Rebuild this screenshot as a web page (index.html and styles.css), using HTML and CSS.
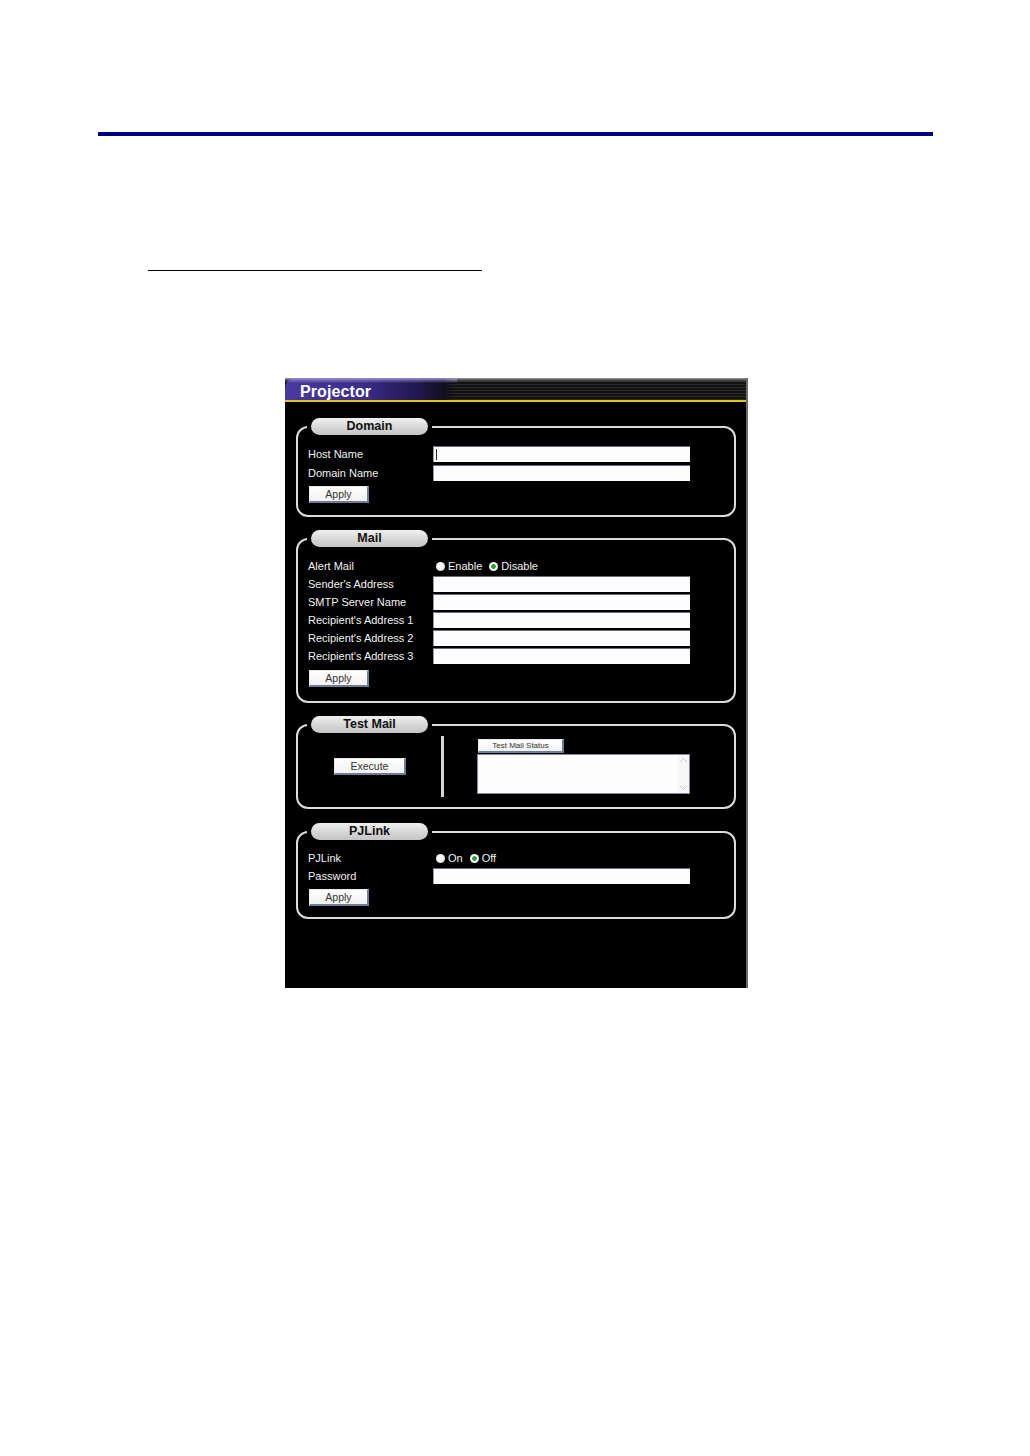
FILE: index.html
```html
<!DOCTYPE html>
<html>
<head>
<meta charset="utf-8">
<title>Projector</title>
<link rel="stylesheet" href="styles.css">
</head>
<body>
<div class="rule"></div>
<div class="subline"></div>
<div class="shot">
  <div class="hdr">
    <div class="tab">Projector</div>
  </div>
  <div class="content">
    <fieldset class="grp g-domain">
      <legend><span class="pill">Domain</span></legend>
      <div class="rows">
        <div class="row"><span class="lbl">Host Name</span><span class="field"><span class="caret"></span></span></div>
        <div class="row"><span class="lbl">Domain Name</span><span class="field"></span></div>
        <button class="btn apply">Apply</button>
      </div>
    </fieldset>

    <fieldset class="grp g-mail">
      <legend><span class="pill">Mail</span></legend>
      <div class="rows">
        <div class="row"><span class="lbl">Alert Mail</span>
          <span class="radios"><span class="radio"></span><span class="rtxt">Enable</span><span class="radio on"></span><span class="rtxt">Disable</span></span>
        </div>
        <div class="row"><span class="lbl">Sender's Address</span><span class="field"></span></div>
        <div class="row"><span class="lbl">SMTP Server Name</span><span class="field"></span></div>
        <div class="row"><span class="lbl">Recipient's Address 1</span><span class="field"></span></div>
        <div class="row"><span class="lbl">Recipient's Address 2</span><span class="field"></span></div>
        <div class="row"><span class="lbl">Recipient's Address 3</span><span class="field"></span></div>
        <button class="btn apply">Apply</button>
      </div>
    </fieldset>

    <fieldset class="grp g-test">
      <legend><span class="pill">Test Mail</span></legend>
      <div class="testwrap">
        <div class="testleft"><button class="btn exec">Execute</button></div>
        <div class="sep"></div>
        <div class="testright">
          <button class="btn status">Test Mail Status</button>
          <div class="tarea">
            <div class="sbar">
              <svg width="9" height="6" viewBox="0 0 9 6"><path d="M1 5 L4.5 1.5 L8 5" fill="none" stroke="#c8c8c8" stroke-width="1"/></svg>
              <svg width="9" height="6" viewBox="0 0 9 6"><path d="M1 1 L4.5 4.5 L8 1" fill="none" stroke="#c8c8c8" stroke-width="1"/></svg>
            </div>
          </div>
        </div>
      </div>
    </fieldset>

    <fieldset class="grp g-pj">
      <legend><span class="pill">PJLink</span></legend>
      <div class="rows">
        <div class="row"><span class="lbl">PJLink</span>
          <span class="radios"><span class="radio"></span><span class="rtxt">On</span><span class="radio on"></span><span class="rtxt">Off</span></span>
        </div>
        <div class="row"><span class="lbl">Password</span><span class="field"></span></div>
        <button class="btn apply">Apply</button>
      </div>
    </fieldset>
  </div>
</div>
</body>
</html>
```

FILE: styles.css
```css
html, body {
  margin: 0;
  padding: 0;
  background: #fff;
  font-family: "Liberation Sans", Arial, sans-serif;
}

.rule {
  margin: 132px 0 0 98px;
  width: 835px;
  height: 4px;
  background: #000080;
}

.subline {
  margin: 134px 0 0 148px;
  width: 334px;
  height: 1px;
  background: #000;
}

.shot {
  margin: 107px 0 0 285px;
  width: 463px;
  height: 610px;
  background: #000;
  box-sizing: border-box;
  border-right: 2px solid #6a6a6a;
  overflow: hidden;
}

.hdr {
  height: 22px;
  border-bottom: 2px solid #e0c02a;
  background:
    linear-gradient(to bottom, #a0a0a0 0, #505050 2px, rgba(0,0,0,0) 4px),
    repeating-linear-gradient(to bottom, #2c2c2c 0, #2c2c2c 1px, #121212 1px, #121212 3px);
  display: flex;
}

.tab {
  width: 172px;
  height: 22px;
  border-top-left-radius: 10px;
  background:
    linear-gradient(to bottom, #9a90d0 0, rgba(120,100,200,0) 5px),
    linear-gradient(to right, #4a3a9e 0, #3b2d88 45%, #221a55 75%, #121020 92%, rgba(18,16,32,0) 100%);
  color: #fff;
  font-weight: bold;
  font-size: 16px;
  line-height: 27px;
  padding-left: 15px;
  box-sizing: border-box;
  letter-spacing: 0.1px;
}

.content {
  padding: 0 10px 0 11px;
}

.grp {
  margin: 13px 0 0 0;
  border: 2px solid #dcdcdc;
  border-radius: 12px;
  padding: 11px 10px 12px 10px;
  min-width: 0;
}

.g-domain { margin-top: 16px; }
.g-mail { padding-bottom: 14px; }
.g-test { padding: 3px 10px 10px 10px; }
.g-pj { margin-top: 14px; padding-top: 10px; padding-bottom: 11px; }

.grp legend {
  padding: 0 4px;
  margin-left: -1px;
}

.pill {
  display: block;
  width: 117px;
  height: 17px;
  border-radius: 9px;
  background: linear-gradient(to bottom, #f0f0f0 0, #d6d6d6 55%, #c4c4c4 100%);
  color: #111;
  font-weight: bold;
  font-size: 12.5px;
  line-height: 17px;
  text-align: center;
}

.rows {
  display: flex;
  flex-direction: column;
  gap: 2px;
  align-items: flex-start;
}

.g-domain .rows { gap: 3px; }
.g-domain .apply { margin-top: 2px; }
.g-mail .apply { margin-top: 4px; }

.row {
  display: flex;
  align-items: center;
  height: 16px;
}

.lbl {
  width: 125px;
  color: #f2f2f2;
  font-size: 11px;
}

.field {
  display: block;
  width: 257px;
  height: 16px;
  box-sizing: border-box;
  background: #fdfdfd;
  border-top: 1px solid #6a6a78;
  border-left: 1px solid #9a9aa6;
  position: relative;
}

.caret {
  position: absolute;
  left: 2px;
  top: 2px;
  width: 1px;
  height: 11px;
  background: #222;
}

.radios {
  display: flex;
  align-items: center;
  padding-left: 3px;
}

.radio {
  width: 9px;
  height: 9px;
  border-radius: 50%;
  background: radial-gradient(circle at 40% 35%, #ffffff 0, #f2f2f2 50%, #c9c9c9 100%);
  margin-right: 3px;
}

.radio.on {
  background: radial-gradient(circle, #2e9a3e 0, #2e9a3e 2px, #ffffff 2.6px, #f0f0f0 70%, #c9c9c9 100%);
}

.rtxt {
  color: #f2f2f2;
  font-size: 11px;
  margin-right: 7px;
}

.btn {
  font-family: "Liberation Sans", Arial, sans-serif;
  padding: 0;
  margin: 0;
  background: linear-gradient(to bottom, #ffffff 0, #f1f1f1 100%);
  color: #333;
  border-style: solid;
  border-width: 1px 2px 2px 1px;
  border-color: #e8e8e8 #6f7c96 #6f7c96 #e8e8e8;
  box-sizing: border-box;
  cursor: default;
}

.apply {
  width: 60px;
  height: 17px;
  font-size: 10.5px;
  line-height: 14px;
  margin-top: 3px;
  margin-left: 1px;
}

.testwrap {
  display: flex;
  align-items: flex-start;
}

.testleft {
  width: 120px;
  height: 61px;
  display: flex;
  align-items: center;
  justify-content: center;
}

.exec {
  width: 72px;
  height: 17px;
  font-size: 10.5px;
  line-height: 14px;
  margin-left: 4px;
}

.sep {
  width: 3px;
  height: 61px;
  background: #d4d4d4;
  margin-left: 13px;
}

.testright {
  margin-left: 33px;
  padding-top: 3px;
  display: flex;
  flex-direction: column;
  align-items: flex-start;
}

.status {
  width: 86px;
  height: 14px;
  font-size: 8px;
  line-height: 11px;
  margin-left: 1px;
}

.tarea {
  width: 213px;
  height: 40px;
  margin-top: 1px;
  box-sizing: border-box;
  background: #fdfdfd;
  border: 1px solid #8a8a9a;
  display: flex;
  justify-content: flex-end;
}

.sbar {
  width: 11px;
  display: flex;
  flex-direction: column;
  justify-content: space-between;
  align-items: center;
  padding: 2px 0;
  background: #f7f7f7;
}
```
